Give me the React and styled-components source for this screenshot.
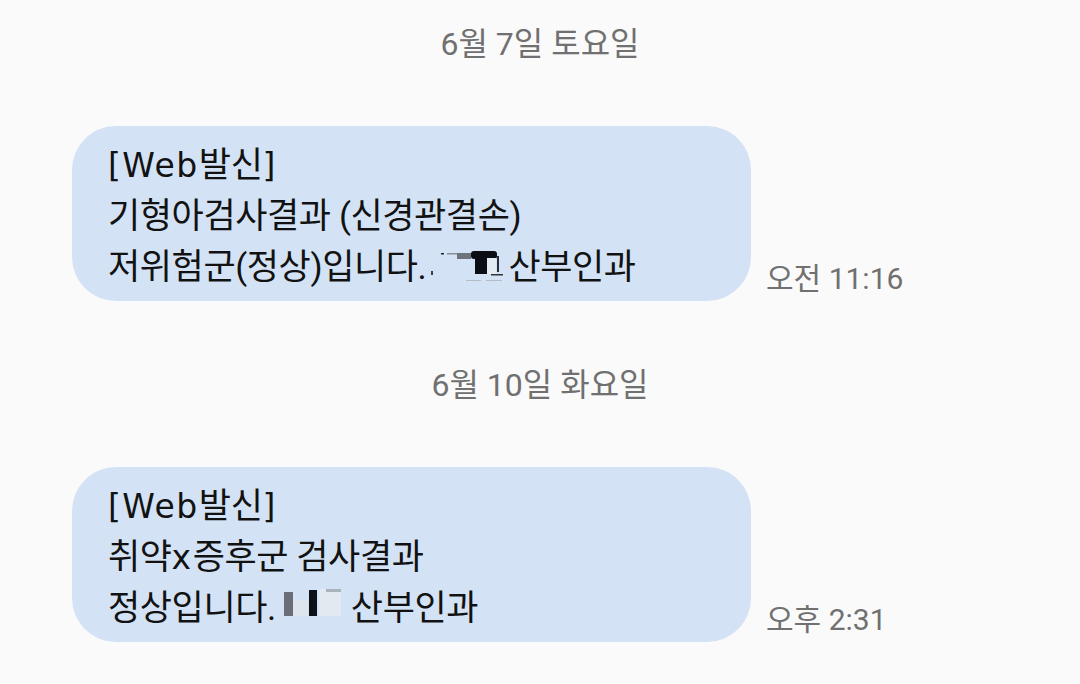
import React from "react";
import styled, { createGlobalStyle } from "styled-components";

const Global = createGlobalStyle`
  html, body { margin: 0; padding: 0; background: #fafafa; }
  body { font-family: Roboto, "Noto Sans CJK KR", sans-serif; }
`;

const Page = styled.div`
  width: 1080px;
  height: 684px;
  overflow: hidden;
  display: flex;
  flex-direction: column;
  padding-top: 24px;
  box-sizing: border-box;
`;

const Section = styled.section`
  display: flex;
  flex-direction: column;
  margin-bottom: 64px;
`;

const DateHeader = styled.div`
  height: 40px;
  line-height: 40px;
  text-align: center;
  font-size: 32px;
  color: #707070;
  margin-bottom: 62px;
`;

const Row = styled.div`
  display: flex;
  align-items: flex-end;
  padding-left: 72px;
  gap: 15px;
`;

const Bubble = styled.div`
  width: 679px;
  height: 175px;
  box-sizing: border-box;
  background: #d3e3f5;
  border-radius: 44px;
  padding: 14px 20px 10px 36px;
  color: #121212;
  font-size: 35px;
  line-height: 51px;
  letter-spacing: -0.4px;
`;

const Line = styled.div`
  white-space: nowrap;
  display: flex;
  align-items: center;
`;

const Latin = styled.span`
  font-family: "DejaVu Sans", Roboto, sans-serif;
  font-size: 33px;
  letter-spacing: 1.5px;
`;

const Time = styled.div`
  font-size: 30px;
  color: #707070;
  line-height: 36px;
  margin-bottom: 4px;
  white-space: nowrap;
`;

const Redacted = styled.svg`
  display: block;
  flex: none;
`;

function RedactA() {
  return (
    <Redacted width="82" height="40" viewBox="0 0 82 40">
      <rect x="5" y="23" width="2" height="4" fill="#3a3d44" />
      <rect x="15" y="5" width="3" height="1.5" fill="#222" />
      <rect x="21" y="5" width="10" height="1.5" fill="#8b9098" />
      <rect x="31" y="5" width="14" height="6" fill="#6f747c" />
      <rect x="45" y="3" width="26" height="8" rx="3" fill="#0b0d14" />
      <rect x="49" y="10" width="12" height="16" fill="#0b0d14" />
      <rect x="61" y="10" width="9" height="16" fill="#e5ebf2" />
      <rect x="71" y="8" width="2" height="16" fill="#2b2f37" />
      <rect x="65" y="26" width="12" height="1.5" fill="#333" />
      <rect x="40" y="32" width="15" height="1" fill="#b5bcc6" />
      <rect x="60" y="32" width="16" height="1" fill="#b5bcc6" />
    </Redacted>
  );
}

function RedactB() {
  return (
    <Redacted width="75" height="40" viewBox="0 0 75 40">
      <rect x="8" y="3" width="9" height="24" fill="#6b6e76" />
      <rect x="17" y="11" width="15" height="16" fill="#dfe5ed" />
      <rect x="33" y="1" width="8" height="26" fill="#0e1118" />
      <rect x="43" y="0" width="22" height="27" fill="#e3e9f0" />
      <rect x="50" y="0" width="15" height="3" fill="#aab2bd" />
    </Redacted>
  );
}

export default function App() {
  return (
    <Page>
      <Global />
      <Section>
        <DateHeader>6월 7일 토요일</DateHeader>
        <Row>
          <Bubble>
            <Line>
              <Latin>[Web</Latin>발신<Latin>]</Latin>
            </Line>
            <Line>기형아검사결과 (신경관결손)</Line>
            <Line>
              저위험군(정상)입니다.
              <RedactA />
              산부인과
            </Line>
          </Bubble>
          <Time>오전 11:16</Time>
        </Row>
      </Section>
      <Section>
        <DateHeader>6월 10일 화요일</DateHeader>
        <Row>
          <Bubble>
            <Line>
              <Latin>[Web</Latin>발신<Latin>]</Latin>
            </Line>
            <Line>
              취약<Latin>x</Latin>증후군 검사결과
            </Line>
            <Line>
              정상입니다.
              <RedactB />
              산부인과
            </Line>
          </Bubble>
          <Time>오후 2:31</Time>
        </Row>
      </Section>
    </Page>
  );
}
